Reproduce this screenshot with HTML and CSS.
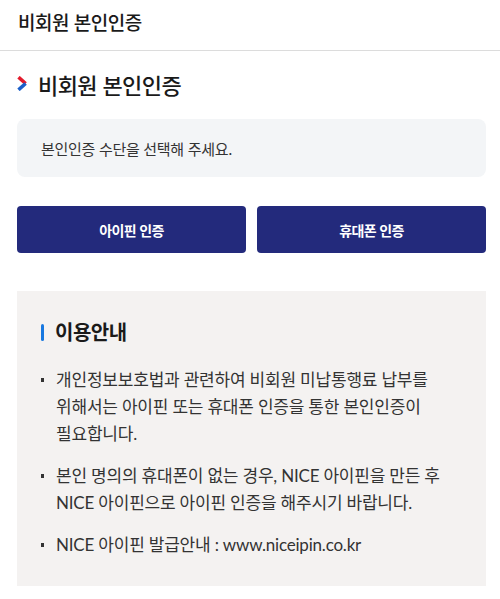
FILE: index.html
```html
<!DOCTYPE html>
<html lang="ko">
<head>
<meta charset="utf-8">
<title>비회원 본인인증</title>
<link rel="stylesheet" href="styles.css">
</head>
<body>
<header class="topbar">
  <h1 class="topbar-title">비회원 본인인증</h1>
</header>
<main class="content">
  <h2 class="page-title">
    <svg class="chev" width="11" height="15" viewBox="0 0 11 15" aria-hidden="true">
      <path d="M1.5 1.2 L8.6 7.5" stroke="#e31b2c" stroke-width="3.6" stroke-linecap="butt" fill="none"/>
      <path d="M8.6 7.5 L1.5 13.8" stroke="#1b5fc9" stroke-width="3.6" stroke-linecap="butt" fill="none"/>
    </svg>
    <span>비회원 본인인증</span>
  </h2>
  <div class="notice">본인인증 수단을 선택해 주세요.</div>
  <div class="btn-row">
    <button class="btn" type="button">아이핀 인증</button>
    <button class="btn" type="button">휴대폰 인증</button>
  </div>
  <section class="guide">
    <h3 class="guide-title">이용안내</h3>
    <ul class="guide-list">
      <li>개인정보보호법과 관련하여 비회원 미납통행료 납부를 위해서는 아이핀 또는 휴대폰 인증을 통한 본인인증이 필요합니다.</li>
      <li>본인 명의의 휴대폰이 없는 경우, NICE 아이핀을 만든 후 NICE 아이핀으로 아이핀 인증을 해주시기 바랍니다.</li>
      <li>NICE 아이핀 발급안내 : www.niceipin.co.kr</li>
    </ul>
  </section>
</main>
</body>
</html>
```
FILE: styles.css
```css
* { box-sizing: border-box; }
html, body {
  margin: 0;
  padding: 0;
  background: #fff;
  font-family: "Noto Sans CJK KR", "Noto Sans", sans-serif;
  color: #222;
  word-break: keep-all;
}
.topbar {
  height: 51px;
  border-bottom: 1px solid #dcdcdc;
  display: flex;
  align-items: center;
  padding: 0 18px 6px;
}
.topbar-title {
  margin: 0;
  font-size: 19px;
  font-weight: 500;
  line-height: 26px;
  letter-spacing: -0.5px;
  color: #1a1a1a;
}
.content {
  padding: 0 14px 0 17px;
}
.page-title {
  margin: 18px 0 20px;
  display: flex;
  align-items: center;
  gap: 10px;
  font-size: 22px;
  font-weight: 500;
  line-height: 30px;
  letter-spacing: -0.6px;
  color: #1a1a1a;
}
.chev { flex: none; margin-top: -2px; }
.notice {
  background: #f3f5f7;
  border-radius: 8px;
  height: 58px;
  padding: 0 24px;
  display: flex;
  align-items: center;
  font-size: 15px;
  letter-spacing: -0.3px;
  color: #333;
}
.btn-row {
  display: grid;
  grid-template-columns: 1fr 1fr;
  gap: 11px;
  margin-top: 29px;
}
.btn {
  height: 47px;
  border: 0;
  border-radius: 4px;
  background: #232a7c;
  color: #fff;
  font-family: inherit;
  font-size: 14px;
  font-weight: 700;
  letter-spacing: -0.6px;
  cursor: pointer;
}
.guide {
  margin-top: 38px;
  background: #f4f2f1;
  padding: 27px 20px 28px 24px;
}
.guide-title {
  margin: 0;
  display: flex;
  align-items: center;
  gap: 11px;
  font-size: 20px;
  font-weight: 700;
  line-height: 28px;
  letter-spacing: -0.5px;
  color: #1a1a1a;
}
.guide-title::before {
  content: "";
  width: 3px;
  height: 17px;
  border-radius: 2px;
  background: #1878e0;
}
.guide-list {
  list-style: none;
  margin: 20px 0 0;
  padding: 0;
}
.guide-list li {
  position: relative;
  padding-left: 15px;
  font-family: "Lato", "Noto Sans CJK KR", sans-serif;
  font-size: 17px;
  line-height: 27px;
  letter-spacing: -0.2px;
  color: #333;
  word-break: keep-all;
}
.guide-list li + li { margin-top: 15px; }
.guide-list li::before {
  content: "";
  position: absolute;
  left: 0;
  top: 12px;
  width: 3px;
  height: 4px;
  background: #333;
}
```
